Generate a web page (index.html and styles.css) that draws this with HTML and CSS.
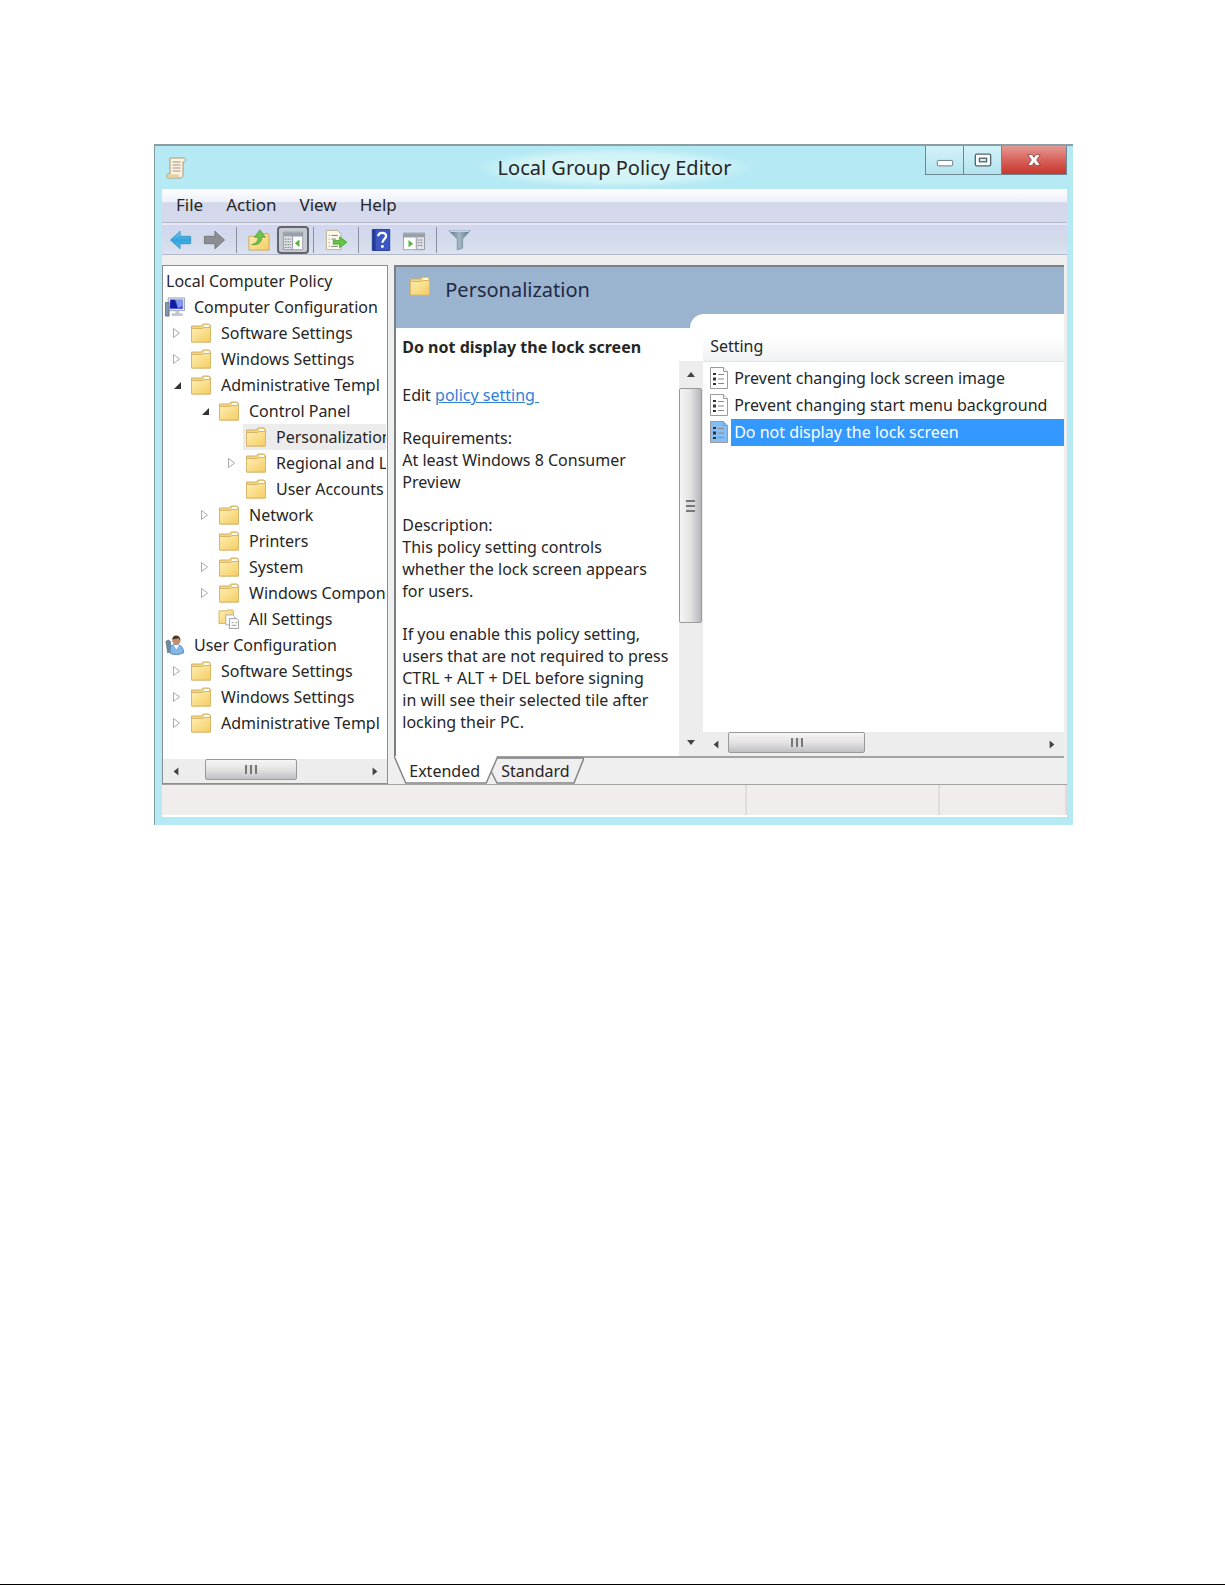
FILE: index.html
```html
<!DOCTYPE html>
<html lang="en">
<head>
<meta charset="utf-8">
<meta name="viewport" content="width=device-width, initial-scale=1">
<title>Local Group Policy Editor</title>
<link rel="stylesheet" href="styles.css">
</head>
<body>
<svg class="defs" aria-hidden="true">
  <defs>
    <linearGradient id="gold" x1="0" y1="0" x2="1" y2="1"><stop offset="0" stop-color="#fdeeb4"/><stop offset="1" stop-color="#f5cd62"/></linearGradient>
    <linearGradient id="sky" x1="0" y1="0" x2="0" y2="1"><stop offset="0" stop-color="#7fd0f2"/><stop offset=".5" stop-color="#2fa3e0"/><stop offset="1" stop-color="#58bdec"/></linearGradient>
    <linearGradient id="steel" x1="0" y1="0" x2="1" y2="0"><stop offset="0" stop-color="#5a7486"/><stop offset=".5" stop-color="#a3b6c2"/><stop offset="1" stop-color="#5a7486"/></linearGradient>
    <symbol id="folder" viewBox="0 0 22 20"><path d="M1.500 3h10l1.500-2h6l1.500 1.500V19h-19z" fill="#f6d778" stroke="#cdb070"/><path d="M14 3h5" stroke="#fff" stroke-width="2"/><path d="M1.500 5.500h11L14 4.500h6.500V19h-19z" fill="url(#gold)" stroke="#d8b868"/></symbol>
    <symbol id="closed" viewBox="0 0 10 12"><path d="M1.500 1.500v9l6-4.500z" fill="#fff" stroke="#aaa"/></symbol>
    <symbol id="open" viewBox="0 0 10 12"><path d="M9 3v7H2z" fill="#333"/></symbol>
    <symbol id="doc" viewBox="0 0 20 22"><path class="paper" d="M1.500.500h13l4 4v17h-17z" stroke="#9a9a9a"/><path class="paper" d="M14.500.500v4h4" stroke="#9a9a9a"/><path d="M4 6h3v2H4zM4 10.500h3v3H4zM4 16h3v2H4z" fill="#333"/><path d="M9 7.500h6M9 12h6M9 16.500h6" stroke="#888"/></symbol>
    <symbol id="computer" viewBox="0 0 23 22"><path d="M4 1h18v14H4z" fill="#dfe2ee" stroke="#98a0b4"/><path d="M6 3h14v10H6z" fill="#3543d0"/><path d="M12 3h8v7l-5 2z" fill="#8297ee"/><path d="M7 3h4l3 9H6z" fill="#101c9c"/><path d="M1 6h4v15H1z" fill="#8497aa" stroke="#62758a"/><path d="M12 15h4v3h4v3H8v-3h4z" fill="#c3c6d0"/></symbol>
    <symbol id="user" viewBox="0 0 23 22"><path d="M1 7l3-2 3 2v12l-4 1z" fill="#71889c"/><path d="M6 20v-6c1-3 4-3.500 7-3.500 4 0 8 3 8 9-5 2.500-11 2.500-15 .5z" fill="#84b6e6" stroke="#4a7fb4"/><path d="M10 11l3 5 3-5z" fill="#fff"/><circle cx="13" cy="6" r="4.500" fill="#c59069"/><path d="M8.500 5c0-6 9-6 9 1l-2-2.500z" fill="#49372b"/></symbol>
    <symbol id="allset" viewBox="0 0 24 22"><path d="M1 2h9l1-1h5l1 1v14H1z" fill="url(#gold)" stroke="#d4b05a"/><path d="M8.500 6.500h8l2 2v9h-10z" fill="#fff" stroke="#aaa"/><path d="M12.500 10.500h8l2 2v9h-10z" fill="#fafafa" stroke="#999"/><path d="M15 15h2M19 15h2M15 18h5" stroke="#999"/></symbol>
    <symbol id="scroll" viewBox="0 0 22 22"><path d="M5 1h14c2 0 2 4 0 4h-1v13c0 2-1 3-3 3H3c-2 0-2-4 0-4h2z" fill="#fbf3df" stroke="#a89880"/><path d="M7.500 5h8M7.500 8h8M7.500 11h8M7.500 14h8" stroke="#a5938a"/><path d="M3 17.500h11c0 2 0 3 2 3H3c-2 0-2-3 0-3z" fill="#e8cf98"/></symbol>
  </defs>
</svg>
<main class="page">
<section class="window" aria-label="Local Group Policy Editor">
  <header class="titlebar">
    <svg class="app-icon"><use href="#scroll"/></svg>
    <h1>Local Group Policy Editor</h1>
    <div class="caption">
      <button class="cap" aria-label="Minimize"><svg viewBox="0 0 20 20"><rect x="1.500" y="10.500" width="17" height="6" rx="1" fill="#fff" stroke="#60737d"/></svg></button>
      <button class="cap" aria-label="Restore"><svg viewBox="0 0 20 20"><rect x="1.500" y="3.500" width="17" height="13" rx="1.500" fill="#fff" stroke="#56666f" stroke-width="1.500"/><rect x="6" y="8" width="8" height="4" fill="#cfeef6" stroke="#56666f" stroke-width="1.500"/></svg></button>
      <button class="cap close" aria-label="Close"><svg viewBox="0 0 20 20"><path d="M3 4h5l2 3 2-3h5l-4 6 4 6h-5l-2-3-2 3H3l4-6z" fill="#fff" stroke="#8d4a48"/></svg></button>
    </div>
  </header>
  <div class="client">
    <nav class="menubar"><button>File</button><button>Action</button><button>View</button><button>Help</button></nav>
    <div class="toolbar">
      <button aria-label="Back"><svg viewBox="0 0 26 24"><path d="M1.500 12L12 2.500v5.500h11.500v8H12v5.500z" fill="url(#sky)" stroke="#3a94c4"/></svg></button>
      <button aria-label="Forward"><svg viewBox="0 0 26 24"><path d="M24.500 12L14 2.500v5.500H2.500v8H14v5.500z" fill="#8c8e92" stroke="#73757a"/></svg></button>
      <i class="sep"></i>
      <button aria-label="Up"><svg viewBox="0 0 26 24"><path d="M2 8h12l2-3h7l1 3v15H2z" fill="url(#gold)" stroke="#c9a65a"/><path d="M5 17c5-1 7-4 7-8H8l6-8 6 8h-4c0 6-4 9-11 8z" fill="#6cc44e" stroke="#4a9c38" stroke-width=".8"/></svg></button>
      <button class="pressed" aria-label="Show console tree" aria-pressed="true"><svg viewBox="0 0 26 24"><path d="M2.500 3.500h21v19h-21z" fill="#dfe1e6" stroke="#90959e"/><path d="M3 4h20v4H3z" fill="#9aa0a9"/><path d="M4 11h7M4 14h7M4 17h7M4 20h7" stroke="#777" stroke-dasharray="2 1"/><path d="M13 9h10v13H13z" fill="#fff"/><path d="M12.500 8v14" stroke="#90959e"/><path d="M20 11.500v8L15 15.500z" fill="#55b53a"/></svg></button>
      <i class="sep near"></i>
      <button aria-label="Export list"><svg viewBox="0 0 26 24"><path d="M2.500 1.500h12l4 4v17h-16z" fill="#fbf8e8" stroke="#b5ad90"/><path d="M5 7h1M5 11h1M5 15h1M5 19h1M8 7h7M8 11h5M8 19h7" stroke="#777"/><path d="M10 12.500h7V8.500l8 6-8 6v-4h-7z" fill="#63c544" stroke="#419a2c" stroke-width=".8"/></svg></button>
      <i class="sep"></i>
      <button aria-label="Help"><svg viewBox="0 0 26 24"><path d="M3.500.500h19v23h-19z" fill="#3b57c4" stroke="#25398e"/><path d="M4 1h3v22H4z" fill="#243a96"/><path d="M10 8c0-5 8.500-5 8.500-.5 0 3.500-4 3.500-4 7.500" fill="none" stroke="#fff" stroke-width="2.500"/><circle cx="14.500" cy="19" r="1.600" fill="#fff"/></svg></button>
      <button aria-label="Show action pane"><svg viewBox="0 0 26 24"><path d="M1.500 4.500h23v18h-23z" fill="#dfe1e6" stroke="#90959e"/><path d="M2 5h22v4H2z" fill="#9aa0a9"/><path d="M2 10h13v12H2z" fill="#fff"/><path d="M15.500 9v13" stroke="#90959e"/><path d="M7 12v8l5-4z" fill="#55b53a"/><path d="M17 12h6M17 15h6M17 18h6" stroke="#777" stroke-dasharray="2 1"/></svg></button>
      <i class="sep"></i>
      <button aria-label="Filter"><svg viewBox="0 0 26 24"><path d="M2 2h23l-8 9v10l-6 2V11z" fill="url(#steel)" stroke="#6d8494" stroke-width=".6"/><path d="M3 2.500h21" stroke="#c9d5dc" stroke-width="1.500"/></svg></button>
    </div>
    <div class="panes">
      <div class="tree">
        <ul>
          <li class="root"><span>Local Computer Policy</span></li>
          <li class="top"><svg class="ico"><use href="#computer"/></svg><span>Computer Configuration</span></li>
          <li class="l1"><svg class="tw"><use href="#closed"/></svg><svg class="ico"><use href="#folder"/></svg><span>Software Settings</span></li>
          <li class="l1"><svg class="tw"><use href="#closed"/></svg><svg class="ico"><use href="#folder"/></svg><span>Windows Settings</span></li>
          <li class="l1"><svg class="tw"><use href="#open"/></svg><svg class="ico"><use href="#folder"/></svg><span>Administrative Templ</span></li>
          <li class="l2"><svg class="tw"><use href="#open"/></svg><svg class="ico"><use href="#folder"/></svg><span>Control Panel</span></li>
          <li class="l3 current"><svg class="tw"></svg><svg class="ico"><use href="#folder"/></svg><span>Personalization</span></li>
          <li class="l3"><svg class="tw"><use href="#closed"/></svg><svg class="ico"><use href="#folder"/></svg><span>Regional and L</span></li>
          <li class="l3"><svg class="tw"></svg><svg class="ico"><use href="#folder"/></svg><span>User Accounts</span></li>
          <li class="l2"><svg class="tw"><use href="#closed"/></svg><svg class="ico"><use href="#folder"/></svg><span>Network</span></li>
          <li class="l2"><svg class="tw"></svg><svg class="ico"><use href="#folder"/></svg><span>Printers</span></li>
          <li class="l2"><svg class="tw"><use href="#closed"/></svg><svg class="ico"><use href="#folder"/></svg><span>System</span></li>
          <li class="l2"><svg class="tw"><use href="#closed"/></svg><svg class="ico"><use href="#folder"/></svg><span>Windows Compon</span></li>
          <li class="l2"><svg class="tw"></svg><svg class="ico"><use href="#allset"/></svg><span>All Settings</span></li>
          <li class="top"><svg class="ico"><use href="#user"/></svg><span>User Configuration</span></li>
          <li class="l1"><svg class="tw"><use href="#closed"/></svg><svg class="ico"><use href="#folder"/></svg><span>Software Settings</span></li>
          <li class="l1"><svg class="tw"><use href="#closed"/></svg><svg class="ico"><use href="#folder"/></svg><span>Windows Settings</span></li>
          <li class="l1"><svg class="tw"><use href="#closed"/></svg><svg class="ico"><use href="#folder"/></svg><span>Administrative Templ</span></li>
        </ul>
        <div class="hscroll">
          <button aria-label="Scroll left"><svg viewBox="0 0 10 10"><path d="M8 0v10L2 5z"/></svg></button>
          <div class="track tree-track"><div class="thumb"><i></i></div></div>
          <button aria-label="Scroll right"><svg viewBox="0 0 10 10"><path d="M2 0v10l6-5z"/></svg></button>
        </div>
      </div>
      <div class="result">
        <div class="view">
          <div class="banner"><svg class="ico"><use href="#folder"/></svg><h2>Personalization</h2></div>
          <div class="body">
            <article class="desc">
              <h3>Do not display the lock screen</h3>
              <p>Edit <a href="#">policy setting&nbsp;</a></p>
              <p>Requirements:<br>At least Windows 8 Consumer Preview</p>
              <p>Description:<br>This policy setting controls<br>whether the lock screen appears for users.</p>
              <p>If you enable this policy setting, users that are not required to press CTRL + ALT + DEL before signing<br>in will see their selected tile after locking their PC.</p>
            </article>
            <div class="vscroll">
              <button aria-label="Scroll up"><svg viewBox="0 0 10 10"><path d="M0 8h10L5 2z"/></svg></button>
              <div class="track"><div class="thumb"><i></i></div></div>
              <button aria-label="Scroll down"><svg viewBox="0 0 10 10"><path d="M0 2h10L5 8z"/></svg></button>
            </div>
            <div class="list">
              <table>
                <thead><tr><th colspan="2">Setting</th></tr></thead>
                <tbody>
                  <tr><td class="mark"><svg><use href="#doc"/></svg></td><td>Prevent changing lock screen image</td></tr>
                  <tr><td class="mark"><svg><use href="#doc"/></svg></td><td>Prevent changing start menu background</td></tr>
                  <tr class="selected"><td class="mark"><svg><use href="#doc"/></svg></td><td>Do not display the lock screen</td></tr>
                </tbody>
              </table>
              <div class="hscroll">
                <button aria-label="Scroll left"><svg viewBox="0 0 10 10"><path d="M8 0v10L2 5z"/></svg></button>
                <div class="track list-track"><div class="thumb"><i></i></div></div>
                <button aria-label="Scroll right"><svg viewBox="0 0 10 10"><path d="M2 0v10l6-5z"/></svg></button>
              </div>
            </div>
          </div>
        </div>
        <div class="tabs">
          <button class="tab active"><svg viewBox="0 0 106 27" preserveAspectRatio="none"><path d="M0 0l12 26h82l12-26" fill="#fff" stroke="#858585" stroke-width="1.500"/></svg><span>Extended</span></button>
          <button class="tab"><svg viewBox="0 0 94 27" preserveAspectRatio="none"><path d="M6 1L1 14l6 12h77L94 1z" fill="#efefef" stroke="#858585" stroke-width="1.500"/></svg><span>Standard</span></button>
        </div>
      </div>
    </div>
    <footer class="status"><span></span><span></span><span></span></footer>
  </div>
</section>
</main>
</body>
</html>
```
FILE: styles.css
```css
* { box-sizing: border-box; }
body { margin: 0; background: #fff; color: #262626; font: 16px/22px "Noto Sans", "Open Sans", sans-serif; }
button { margin: 0; padding: 0; border: 0; background: none; font: inherit; color: inherit; }
h1, h2, h3, p, ul { margin: 0; padding: 0; font-weight: normal; }
svg { display: block; }
.defs { position: absolute; width: 0; height: 0; }
.page { min-height: 100vh; padding: 144px 152px 0 154px; border-bottom: 1px solid #000; }

.window { background: #b5e9f4; border-top: 2px solid #8a9ea4; border-left: 1px solid #7f9ba3; padding: 0 6px 8px 7px; }
.titlebar { display: grid; grid-template-columns: 1fr auto 1fr; height: 43px; align-items: center; }
.app-icon { width: 22px; height: 22px; margin-left: 3px; }
.titlebar h1 { font-size: 20px; line-height: 40px; padding: 0 24px; background: radial-gradient(closest-side, #dcf6f6, #d0f3f7 70%, #b5e9f4); }
.caption { display: flex; justify-self: end; align-self: start; border: 1px solid #6b8791; border-top: 0; }
.cap { display: grid; place-items: center; width: 38px; height: 28px; border-right: 1px solid #6b8791; background: linear-gradient(#d3f2f9, #b4e3ef); }
.cap svg { width: 18px; height: 18px; }
.close { width: 64px; border: 0; background: linear-gradient(#e49a94, #d8625a 50%, #c8362c); }

.client { background: #efefef; }
.menubar { display: flex; gap: 23px; height: 34px; padding: 0 14px 1px; border-bottom: 1px solid #b4b7c6; background: linear-gradient(#fff, #edf0fa 38%, #d3d7ea 42%, #d6daec); font-size: 17px; }
.toolbar { display: flex; align-items: center; gap: 4px; height: 32px; padding: 0 4px; border-top: 2px solid #e6e9f5; border-bottom: 1px solid #b4b7c6; background: linear-gradient(#d2d5f0, #d3dbea 50%, #dae2f3); }
.toolbar button { display: grid; place-items: center; width: 29px; height: 28px; }
.toolbar svg { width: 24px; height: 22px; }
.toolbar .pressed { width: 32px; border: 2px solid #62656c; border-radius: 4px; background: #c6c9d2; }
.sep { width: 1px; height: 26px; margin: 0 3px 0 4px; background: #8b8e9c; }
.near { margin-left: 0; }

.panes { display: flex; gap: 6px; padding-top: 10px; }
.tree { flex: 0 0 25%; min-width: 0; display: flex; flex-direction: column; border: 1px solid #8b8d92; background: #fff; }
.tree ul { flex: 1; list-style: none; padding: 2px 0 23px; overflow: hidden; margin-right: 1px; }
.tree li { display: flex; align-items: center; height: 26px; white-space: nowrap; overflow: hidden; }
.tree span { flex: none; }
.ico { flex: none; width: 22px; height: 20px; }
.tw { flex: none; width: 10px; height: 12px; margin-right: 8px; }
.root { padding-left: 3px; }
.top { gap: 8px; padding-left: 1px; }
.tree .l1 .ico, .tree .l2 .ico, .tree .l3 .ico { margin-right: 9px; }
.l1 { padding-left: 9px; }
.l2 { padding-left: 37px; }
.l3 { padding-left: 64px; }
.current { background: linear-gradient(90deg, #fff 80px, #ececec 80px); }

.hscroll { display: flex; height: 24px; background: #ededed; }
.hscroll button { display: grid; place-items: center; width: 25px; }
.hscroll svg, .vscroll svg { width: 8px; height: 9px; fill: #444; }
.track { flex: 1; }
.thumb { display: grid; place-items: center; border: 1px solid #999; border-radius: 2px; background: linear-gradient(#f5f5f5, #e3e3e3 50%, #bfc0c4); }
.hscroll .thumb { height: 21px; }
.hscroll .thumb i { width: 12px; height: 9px; background: repeating-linear-gradient(90deg, #777 0 2px, #ddd 2px 5px); }
.tree-track .thumb { width: 53%; margin-left: 17px; }
.list-track .thumb { width: 44%; }

.result { flex: 1; min-width: 0; display: flex; flex-direction: column; padding-right: 3px; }
.view { flex: 1; display: flex; flex-direction: column; border-top: 2px solid #7b8087; border-left: 2px solid #7b8087; background: #fff; }
.banner { position: relative; display: flex; gap: 14px; height: 61px; padding: 9px 13px; background: #9ab3cf; }
.banner h2 { font-size: 20px; line-height: 28px; color: #1f2a44; }
.banner::after { content: ""; position: absolute; right: 0; bottom: 0; width: 56%; height: 14px; border-radius: 14px 0 0; background: #fff; }
.body { flex: 1; display: grid; grid-template-columns: 283fr 24px 361fr; }
.desc { padding: 8px 9px 0 6px; }
.desc h3 { font-size: 16px; font-weight: bold; margin-bottom: 26px; }
.desc p { margin-bottom: 21px; }
.desc a { color: #2f7fd6; }
.vscroll { display: flex; flex-direction: column; margin-top: 33px; background: #ededed; }
.vscroll button { display: grid; place-items: center; height: 27px; }
.vscroll .thumb { height: 69%; margin-right: 1px; background: linear-gradient(90deg, #f5f5f5, #e3e3e3 50%, #b5b5bc); }
.vscroll .thumb i { width: 9px; height: 12px; background: repeating-linear-gradient(#777 0 2px, #ddd 2px 5px); }
.list { display: flex; flex-direction: column; min-width: 0; }
.list table { width: 100%; border-collapse: collapse; }
.list th { height: 33px; padding: 4px 7px 0; border-bottom: 1px solid #e0e3e6; background: linear-gradient(#fff 30%, #f0f1f3); font-weight: normal; text-align: left; }
.list tbody::before { content: ""; display: block; height: 3px; }
.list td { height: 27px; padding: 0 0 0 3px; white-space: nowrap; }
.list .mark { width: 28px; padding-left: 6px; }
.list .mark svg { width: 20px; height: 22px; }
.paper { fill: var(--paper, #fff); }
.selected { --paper: #85bdf5; }
.selected td:last-child { background: #3398ff; color: #fff; }
.list .hscroll { margin-top: auto; }

.tabs { display: flex; height: 28px; border-top: 2px solid #a3a3a3; }
.tab { position: relative; width: 92px; text-align: left; }
.tab svg { position: absolute; left: 0; top: -2px; width: 104px; height: 28px; }
.tab + .tab svg { width: 94px; left: 4px; top: -1px; height: 27px; }
.tab.active { z-index: 1; }
.tab span { position: relative; display: block; padding-left: 15px; }
.status { display: grid; grid-template-columns: 585fr 193fr 127fr; height: 33px; border-top: 1px solid #a3a3a3; border-bottom: 2px solid #fff; background: #f0edec; }
.status span { border-right: 2px solid #e0dcdb; }
```
